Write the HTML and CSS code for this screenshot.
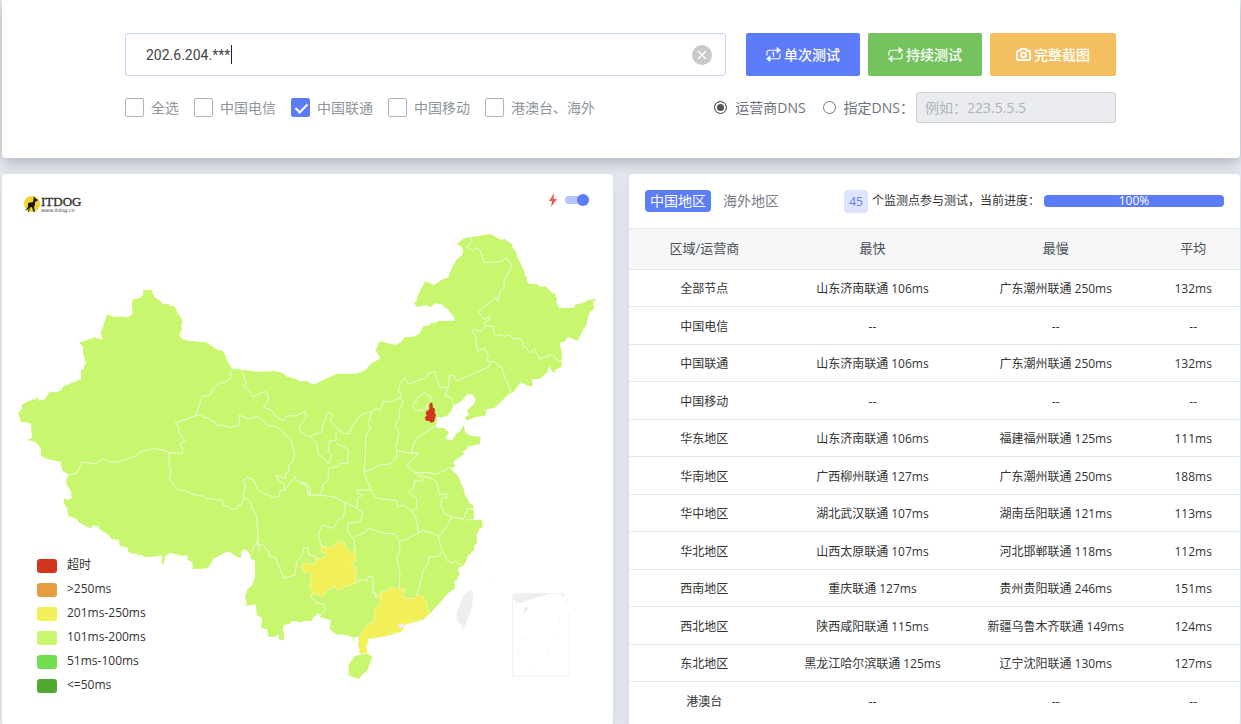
FILE: index.html
```html
<!DOCTYPE html>
<html lang="zh-CN">
<head>
<meta charset="utf-8">
<title>ITDOG</title>
<link rel="stylesheet" href="styles.css">
</head>
<body>
<main class="page">
  <section class="card query">
    <form class="query-form">
      <div class="row">
        <div class="field">
          <input class="field-input" type="text" aria-label="IP" value="202.6.204.***">
          <span class="caret"></span>
          <button class="clear" type="button" aria-label="清除">
            <svg viewBox="0 0 20 20"><circle cx="10" cy="10" r="10" fill="#c9c9c9"/><path d="M6 6l8 8M14 6l-8 8" stroke="#fff" stroke-width="1.5"/></svg>
          </button>
        </div>
        <div class="buttons">
          <button class="btn btn-blue" type="button"><svg viewBox="0 0 16 16"><path d="M1 9V6a2.500 2.500 0 0 1 2.500-2.500H14M12 1l3 2.500L12 6zM15 7v3a2.500 2.500 0 0 1-2.500 2.500H2M4 10l-3 2.500L4 15zM6.500 7L8 6v4.500"/></svg>单次测试</button>
          <button class="btn btn-green" type="button"><svg viewBox="0 0 16 16"><path d="M1 9V6a2.500 2.500 0 0 1 2.500-2.500H14M12 1l3 2.500L12 6zM15 7v3a2.500 2.500 0 0 1-2.500 2.500H2M4 10l-3 2.500L4 15z"/></svg>持续测试</button>
          <button class="btn btn-orange" type="button"><svg viewBox="0 0 16 16"><path class="bold" d="M2.500 4H4.500L5.500 2h5l1 2h2a1.500 1.500 0 0 1 1.500 1.500v7a1.500 1.500 0 0 1-1.500 1.500h-11A1.500 1.500 0 0 1 1 12.500v-7A1.500 1.500 0 0 1 2.500 4z"/><circle class="bold" cx="8" cy="8.500" r="2.500"/></svg>完整截图</button>
        </div>
      </div>
      <div class="row options">
        <div class="checks">
          <label class="check"><input type="checkbox">全选</label>
          <label class="check"><input type="checkbox">中国电信</label>
          <label class="check"><input type="checkbox" checked>中国联通</label>
          <label class="check"><input type="checkbox">中国移动</label>
          <label class="check"><input type="checkbox">港澳台、海外</label>
        </div>
        <div class="dns">
          <label class="radio"><input type="radio" name="dns" checked>运营商DNS</label>
          <label class="radio"><input type="radio" name="dns"><span>指定DNS<span class="colon">：</span></span></label>
          <input class="dns-input" type="text" aria-label="DNS" placeholder="例如：223.5.5.5" disabled>
        </div>
      </div>
    </form>
  </section>

  <div class="columns">
    <section class="card map-card">
      <header class="map-head">
        <svg class="logo" viewBox="0 0 60 18">
          <circle cx="9" cy="9" r="8" fill="#f0d530"/>
          <path d="M2 16l3-4V8l5-1 1-6 1 2 3 2-1 1-2 1v3l-1 2 1 5-2-1-1-4-3 1-1 4H6l1-4z" fill="#1b1712"/>
          <text class="logo-name" x="18" y="11">ITDOG</text>
          <text class="logo-url" x="18" y="17">www.itdog.cn</text>
        </svg>
        <div class="speed">
          <svg class="bolt" viewBox="0 0 8 14"><path d="M5 0L0 8h3L2 14l6-8H4.500z" fill="#ef5b50"/></svg>
          <input class="switch" type="checkbox" aria-label="极速" checked>
        </div>
      </header>
      <div class="map-body">
      <svg class="map" viewBox="6 168 1833 1497" role="img" aria-label="中国地图">
        <path class="land" d="M54 728L66 718 64 705 80 696 96 690 94 686 104 689 112 681 116 692 135 688 148 667 172 666 184 660 187 651 243 627 243 600 252 595 252 586 258 581 249 550 248 529 237 518 286 502 295 507 309 507 302 490 322 432 340 440 371 440 376 443 390 438 398 430 395 400 400 388 424 382 430 374 429 360 457 359 455 367 462 375 462 381 478 390 490 402 505 402 510 408 522 408 529 417 533 431 544 443 548 455 543 465 547 478 539 490 540 500 547 508 570 513 617 517 655 541 669 542 685 580 699 597 720 598 770 605 825 603 850 609 860 620 880 624 900 634 925 634 930 640 945 643 970 630 1010 612 1070 611 1095 601 1115 580 1140 566 1138 558 1127 541 1139 513 1187 525 1203 517 1213 502 1240 500 1258 492 1270 469 1290 466 1293 458 1302 460 1318 452 1365 453 1361 440 1345 420 1325 403 1305 400 1292 412 1280 405 1252 411 1241 400 1249 394 1252 380 1275 334 1303 345 1325 329 1346 322 1348 310 1370 268 1387 255 1389 240 1384 229 1369 224 1391 205 1410 202 1470 192 1505 210 1513 206 1538 224 1536 230 1549 248 1552 262 1562 280 1566 290 1574 305 1574 317 1581 320 1580 333 1588 341 1612 343 1620 350 1635 348 1657 369 1668 372 1667 382 1673 388 1668 396 1678 414 1720 413 1728 403 1750 398 1765 390 1790 386 1780 395 1782 416 1770 425 1761 450 1759 467 1750 478 1733 512 1704 502 1695 514 1679 520 1686 550 1685 590 1664 601 1667 608 1656 604 1648 588 1643 606 1620 626 1595 628 1599 640 1597 650 1580 646 1562 637 1540 666 1527 672 1483 714 1460 718 1455 738 1430 740 1399 752 1395 742 1406 736 1401 722 1424 700 1426 685 1418 674 1402 672 1385 693 1360 707 1353 725 1340 738 1325 742 1313 741 1308 767 1312 773 1333 774 1347 788 1337 801 1340 808 1357 811 1370 790 1380 783 1391 765 1396 790 1415 798 1442 800 1440 822 1402 830 1400 838 1388 845 1392 852 1360 876 1366 890 1350 895 1375 918 1392 960 1396 978 1407 992 1408 1000 1420 1006 1422 1050 1445 1049 1449 1072 1440 1074 1430 1095 1431 1122 1424 1124 1423 1140 1403 1158 1398 1175 1387 1190 1376 1192 1375 1202 1380 1215 1373 1218 1374 1226 1362 1235 1366 1255 1346 1268 1300 1320 1289 1332 1270 1350 1215 1364 1196 1362 1197 1388 1158 1399 1103 1407 1099 1425 1102 1448 1080 1451 1074 1422 1077 1400 1062 1402 1061 1422 1058 1402 1036 1394 1008 1393 990 1378 992 1350 960 1342 962 1333 950 1332 938 1345 935 1352 918 1353 910 1352 905 1357 893 1355 876 1353 869 1363 853 1364 848 1380 853 1390 851 1411 838 1411 836 1392 820 1402 804 1399 802 1378 783 1374 786 1344 770 1335 768 1303 735 1308 740 1300 735 1280 742 1258 756 1246 765 1220 765 1172 752 1167 750 1152 734 1137 724 1145 724 1162 715 1163 690 1147 680 1145 640 1166 627 1192 608 1196 578 1197 577 1175 563 1171 562 1156 545 1157 510 1148 495 1160 491 1184 485 1180 486 1156 460 1160 432 1162 425 1153 419 1158 405 1149 400 1153 385 1145 384 1133 360 1128 356 1110 336 1108 325 1095 297 1076 295 1067 275 1068 273 1076 236 1057 230 1047 204 1037 202 1015 192 1000 192 984 203 990 215 984 213 965 198 940 200 925 208 915 187 902 182 875 143 868 123 857 122 835 108 816 82 810 98 803 95 797 93 762 75 755 63 757 60 745z"/>
        <g class="border">
          <path d="M699 598L689 605 694 620 688 629 670 640 665 636 640 655 630 676 606 679 597 710 586 737 525 760 536 768 536 785 555 812 540 822 548 838 548 850 504 848"/>
          <path d="M586 737L605 735 610 742 625 744 632 752 645 754 650 765 668 766 695 774 700 768 710 770 718 760 718 735 748 748 768 740 785 747 805 768 823 768 850 785 855 795 872 806 880 840 884 855 876 878 864 885 868 903 858 910 856 925 826 916 838 935 850 940 856 960 840 963 838 978 820 983 800 972 790 972 775 960 758 927 740 923 728 933 737 943 735 955 728 980"/>
          <path d="M208 914L230 910 247 876 285 881 310 865 325 874 355 876 385 865 408 858 418 846 460 836 490 840 515 850M504 848L510 870 503 882 513 895 509 930 535 960 557 962 580 974 610 978 618 986 640 986 655 994 660 988 665 988 672 1008 690 1010 695 1018 712 1016 715 1005 725 1003 732 980 752 996 758 1018 770 1040 777 1145M755 1150L760 1130 770 1125 768 1112 779 1126 790 1125 806 1145 808 1160 825 1162 852 1225 885 1215 890 1175 905 1160 912 1132 925 1134 926 1154 948 1160 950 1175"/>
          <path d="M724 600L738 636 731 648 752 668 757 682 780 670 800 665 806 690 790 710 815 722 828 740 850 752 860 738 888 737 915 725 920 740 898 770 900 785 925 800 965 786 970 760 982 728 995 730 997 740 990 755 1018 780 1037 792 1048 790 1060 763 1085 733 1098 730 1105 725 1115 728 1120 718 1142 717 1150 695 1175 695 1200 683 1202 672 1195 664 1200 640 1215 622 1225 642 1260 628 1275 628 1285 610 1305 604 1310 625 1320 653 1345 653 1349 615 1362 618 1372 635 1380 628 1440 602 1468 590 1470 575 1485 576 1498 592 1504 588 1515 625 1530 655 1530 668"/>
          <path d="M1345 653L1335 675 1355 685 1361 705M930 800L950 820 955 850 985 880 997 855 985 845 988 812 1008 812 1008 790 1018 780M1008 820L1045 838 1043 880 1020 880 1015 890 985 895 985 930 968 945 968 960 955 975M856 960L870 938 885 920 890 932 918 940 930 955 930 978M900 940L918 944 925 975 955 975M955 975L1000 980 1035 998 1072 1015"/>
          <path d="M1115 728L1105 760 1110 775 1097 800 1097 840 1092 907 1140 885 1170 882 1190 862 1190 842 1235 850 1255 850 1220 888 1245 908 1285 908 1310 912 1325 905 1345 895 1350 892M1200 683L1210 695 1197 720 1200 740 1185 765 1197 790 1188 830 1190 842M1235 850L1235 838 1250 805 1280 785 1308 767"/>
          <path d="M1092 907L1105 940 1115 965 1130 985 1190 992 1193 1010 1210 1005 1235 1022 1250 1015 1250 985 1225 967 1240 955 1245 930 1265 935 1270 925 1245 908M1260 907L1275 922 1285 920 1310 935 1318 975 1340 970 1340 982 1325 985 1322 1005 1335 1032 1355 1040 1340 1070 1315 1100 1300 1090 1280 1085 1270 1080 1255 1088 1250 1050 1235 1022"/>
          <path d="M1355 1040L1390 1048 1403 1015 1422 1018M1397 1050L1422 1048M1315 1100L1322 1130 1330 1145 1340 1170 1355 1180 1365 1172 1385 1188M1330 1145L1310 1160 1287 1160 1283 1185 1270 1200 1265 1225 1250 1275M1115 960L1070 960 1075 970 1088 975 1072 985 1072 1015 1090 1030 1080 1055 1043 1060 1043 1085 1063 1110 1065 1145M1063 1100L1100 1085 1105 1075 1150 1090 1185 1092 1190 1100 1198 1115 1225 1105 1255 1088M1198 1115L1200 1140 1190 1165 1200 1210 1197 1255"/>
          <path d="M1035 998L1035 1020 1028 1045 1015 1050 1000 1075 965 1065 955 1095 965 1130 980 1132M1065 1240L1085 1228 1100 1232 1105 1220 1118 1220 1120 1250 1118 1270 1128 1268 1126 1282 1142 1276M932 1280L950 1300 973 1303 976 1322 960 1335"/>
          <path d="M1410 202L1417 212 1400 232 1420 242 1428 233 1440 240 1452 278 1475 276 1505 275 1515 264 1522 268 1537 288 1527 305 1513 330 1512 356 1502 360 1494 395 1488 382 1435 425 1452 448 1468 440 1468 450 1454 456 1456 468 1478 468 1482 490 1490 497 1505 494 1510 500 1527 495 1540 507 1560 505 1568 515 1567 527 1580 532 1585 545 1592 548 1603 535 1618 568 1635 560 1645 562 1648 552 1655 557 1662 555 1668 568 1685 575M1456 468L1443 485 1423 478 1415 482 1428 500 1427 520 1433 543 1455 535 1465 560 1460 572 1470 575"/>
          <path d="M1272 665L1283 677 1292 678 1293 697 1280 705 1282 715 1270 717 1270 722 1245 720 1238 710 1240 700 1248 698 1248 685 1265 675z"/>
        </g>
        <path class="slow" d="M950 1167L975 1162 980 1152 963 1145 965 1132 975 1130 985 1136 995 1128 1010 1125 1015 1110 1022 1118 1035 1116 1038 1135 1052 1148 1065 1142 1066 1172 1052 1190 1068 1190 1070 1205 1065 1208 1068 1240 1055 1243 1045 1250 1035 1248 1018 1262 1010 1258 1005 1248 980 1262 970 1278 955 1275 950 1270 940 1272 932 1280 938 1265 930 1245 935 1215 925 1205 912 1210 905 1188 912 1180 945 1182z"/>
        <path class="slow" d="M1140 1275L1145 1262 1162 1265 1165 1255 1175 1250 1190 1257 1218 1257 1205 1280 1225 1285 1245 1285 1250 1275 1265 1278 1280 1298 1283 1320 1289 1332 1275 1340 1270 1350 1243 1352 1215 1364 1209 1382 1197 1388 1175 1388 1158 1399 1103 1407 1105 1422 1099 1425 1102 1448 1080 1451 1074 1422 1077 1400 1105 1362 1122 1355 1125 1320 1140 1300z"/>
        <path class="land" d="M1065 1458L1100 1450 1117 1460 1108 1485 1100 1505 1090 1510 1076 1527 1046 1516 1046 1482z"/>
        <path class="timeout" d="M1293 697L1297 700 1299 713 1305 716 1304 728 1308 735 1302 755 1292 758 1288 753 1278 752 1274 742 1280 738 1277 727 1288 718 1288 703z"/>
        <path class="empty" d="M1412 1258L1420 1270 1416 1310 1400 1355 1390 1382 1388 1370 1370 1350 1370 1325 1388 1280zM1192 1370l5-8 12-2 6 8-10 8zM1538 1278l12-8h104l-62 18-30 10h-14zM1574 1312h12l-8 14-10 4zM1680 1270h14l-4 14z"/>
        <path class="sea" d="M1538 1270V1518H1708V1330M1538 1270H1694M1702 1286l-8 16M1677 1345v18M1580 1398l-8 12M1676 1394l-8 12M1555 1440v14M1646 1442l-8 14M1608 1486l-8 4M1470 1238h4"/>
      </svg>
      <ul class="legend">
        <li><i class="swatch s-timeout"></i>超时</li>
        <li><i class="swatch s-250"></i>&gt;250ms</li>
        <li><i class="swatch s-201"></i>201ms-250ms</li>
        <li><i class="swatch s-101"></i>101ms-200ms</li>
        <li><i class="swatch s-51"></i>51ms-100ms</li>
        <li><i class="swatch s-50"></i>&lt;=50ms</li>
      </ul>
      </div>
    </section>

    <section class="card result">
      <header class="result-head">
        <nav class="tabs">
          <a class="tab active" href="#china">中国地区</a>
          <a class="tab" href="#overseas">海外地区</a>
        </nav>
        <div class="progress">
          <span class="count">45</span>
          <span>个监测点参与测试，当前进度<span class="colon">：</span></span>
          <div class="bar"><div class="bar-fill" style="width:100%">100%</div></div>
        </div>
      </header>
      <table class="stats">
        <thead><tr><th class="c-area">区域/运营商</th><th class="c-fast">最快</th><th class="c-slow">最慢</th><th class="c-avg">平均</th></tr></thead>
        <tbody>
          <tr><td>全部节点</td><td>山东济南联通 106ms</td><td>广东潮州联通 250ms</td><td>132ms</td></tr>
          <tr><td>中国电信</td><td>--</td><td>--</td><td>--</td></tr>
          <tr><td>中国联通</td><td>山东济南联通 106ms</td><td>广东潮州联通 250ms</td><td>132ms</td></tr>
          <tr><td>中国移动</td><td>--</td><td>--</td><td>--</td></tr>
          <tr><td>华东地区</td><td>山东济南联通 106ms</td><td>福建福州联通 125ms</td><td>111ms</td></tr>
          <tr><td>华南地区</td><td>广西柳州联通 127ms</td><td>广东潮州联通 250ms</td><td>188ms</td></tr>
          <tr><td>华中地区</td><td>湖北武汉联通 107ms</td><td>湖南岳阳联通 121ms</td><td>113ms</td></tr>
          <tr><td>华北地区</td><td>山西太原联通 107ms</td><td>河北邯郸联通 118ms</td><td>112ms</td></tr>
          <tr><td>西南地区</td><td>重庆联通 127ms</td><td>贵州贵阳联通 246ms</td><td>151ms</td></tr>
          <tr><td>西北地区</td><td>陕西咸阳联通 115ms</td><td>新疆乌鲁木齐联通 149ms</td><td>124ms</td></tr>
          <tr><td>东北地区</td><td>黑龙江哈尔滨联通 125ms</td><td>辽宁沈阳联通 130ms</td><td>127ms</td></tr>
          <tr><td>港澳台</td><td>--</td><td>--</td><td>--</td></tr>
        </tbody>
      </table>
    </section>
  </div>
</main>
</body>
</html>
```

FILE: styles.css
```css
* { box-sizing: border-box; }
body {
  margin: 0;
  background: #e8ebf1;
  color: #333;
  font: 12px/18px "Open Sans", "Noto Sans CJK SC", sans-serif;
}
input, button { font: inherit; color: inherit; margin: 0; }
.page { padding: 0 1px 0 2px; }
.colon { font-family: "Noto Sans CJK TC", sans-serif; line-height: 1; }
.card {
  background: #fff;
  border-radius: 4px;
  box-shadow: 0 4px 14px rgba(90, 105, 120, .18);
}

.query { padding: 33px 124px 35px 123px; border-radius: 0 0 4px 4px; box-shadow: 0 4px 16px rgba(70, 85, 95, .4); }
.query-form { font-size: 14px; line-height: 20px; }
.row { display: flex; justify-content: space-between; gap: 20px; }
.options { align-items: center; margin-top: 16px; }
.field { position: relative; display: flex; flex: 1; }
.field-input {
  width: 100%;
  height: 43px;
  padding: 0 50px 0 20px;
  border: 1px solid #c8d3fb;
  border-radius: 3px;
  background: #fff;
  color: #444;
  font-family: Roboto, "Noto Sans CJK SC", sans-serif;
  outline: 0;
}
.caret { position: absolute; left: 106px; top: 12px; width: 1px; height: 19px; background: #222; }
.clear { position: absolute; right: 14px; top: 12px; width: 20px; height: 20px; padding: 0; border: 0; background: none; }
.clear svg { display: block; }
.checks { display: flex; gap: 15px; color: #8f949d; }
.check { display: flex; align-items: center; gap: 7px; white-space: nowrap; }
.check input { appearance: none; width: 19px; height: 19px; border: 1px solid #b0b2bd; border-radius: 2px; background: #fff; }
.check input:checked { position: relative; border-color: #5c7cfa; background: #5c7cfa; }
.check input:checked::after {
  content: "";
  position: absolute;
  left: 6px;
  top: 2px;
  width: 5px;
  height: 10px;
  border: solid #fff;
  border-width: 0 2px 2px 0;
  transform: rotate(45deg);
}
.buttons { display: flex; gap: 8px; }
.btn { display: flex; align-items: center; gap: 3px; height: 43px; padding: 0 20px; border: 0; border-radius: 2px; color: #fff; font-weight: 500; white-space: nowrap; }
.btn svg { width: 15px; height: 15px; fill: none; stroke: #fff; stroke-width: 1.2; }
.btn .bold { stroke-width: 2; }
.btn-blue { background: #5c7cfa; }
.btn-green { background: #74c35f; }
.btn-orange { padding: 0 26px; background: #f4bf60; }
.dns { display: flex; align-items: center; color: #6c737e; }
.radio { display: flex; align-items: center; gap: 8px; white-space: nowrap; margin-right: 17px; }
.radio + .radio { margin-right: 2px; }
.radio input { appearance: none; width: 13px; height: 13px; border: 1px solid #777; border-radius: 50%; }
.radio input:checked { border-color: #555; background: #555; box-shadow: inset 0 0 0 2px #fff; }
.dns-input { width: 200px; height: 31px; padding: 0 8px; border: 1px solid #cdd0da; border-radius: 3px; background: #eaebef; font-family: "Open Sans", "Noto Sans CJK TC", sans-serif; }
.dns-input::placeholder { color: #b0b4bc; opacity: 1; }

.columns { display: grid; grid-template-columns: 1fr 1fr; gap: 16px; margin-top: 16px; }
.map-head { display: flex; justify-content: space-between; align-items: center; height: 52px; padding: 4px 24px 0 21px; }
.logo { width: 60px; height: 18px; margin-top: 4px; }
.logo-name { font: 13px "Liberation Serif", serif; fill: #302a28; stroke: #302a28; stroke-width: .3; }
.logo-url { font: 5px "DejaVu Sans", sans-serif; fill: #444; }
.speed { display: flex; align-items: center; gap: 8px; margin-bottom: 4px; }
.bolt { width: 8px; height: 14px; }
.switch { appearance: none; position: relative; width: 24px; height: 8px; border-radius: 4px; background: #b5c4fd; }
.switch::after { content: ""; position: absolute; right: 0; top: -2px; width: 12px; height: 12px; border-radius: 50%; background: #5c7cfa; }
.map-body { position: relative; }
.map { display: block; width: 100%; }
.land { fill: #c8f76f; }
.border { fill: none; stroke: #f1fdd9; stroke-width: 3; stroke-linejoin: round; }
.slow { fill: #f3ef57; stroke: #fbf9c0; stroke-width: 2; }
.timeout { fill: #d2341d; }
.empty { fill: #eee; }
.sea { fill: none; stroke: #f1f1f1; stroke-width: 3; }
.legend { position: absolute; left: 35px; bottom: 28px; margin: 0; padding: 0; list-style: none; line-height: 24px; }
.legend li { display: flex; align-items: center; gap: 10px; }
.swatch { width: 20px; height: 14px; margin-top: 2px; border-radius: 3px; }
.s-timeout { background: #d2341d; }
.s-250 { background: #e69d42; }
.s-201 { background: #f3ef57; }
.s-101 { background: #c8f76f; }
.s-51 { background: #72df50; }
.s-50 { background: #50a830; }

.result-head { display: flex; justify-content: space-between; align-items: center; height: 54px; padding: 0 16px; }
.tabs { display: flex; gap: 7px; font-size: 14px; line-height: 22px; }
.tab { padding: 0 5px; border-radius: 4px; color: #777c85; text-decoration: none; white-space: nowrap; }
.tab.active { background: #5c7cfa; color: #fff; }
.progress { display: flex; align-items: center; gap: 4px; white-space: nowrap; }
.count { padding: 0 5px; border-radius: 4px; background: #dee4fe; color: #5c7cfa; line-height: 23px; }
.bar { width: 180px; border-radius: 4px; background: #e9ecef; }
.bar-fill { border-radius: 4px; background: #5c7cfa; color: #fff; text-align: center; line-height: 12px; }
.stats { width: 100%; border-collapse: collapse; table-layout: fixed; text-align: center; }
.stats th { height: 41px; padding: 0 2px 2px 0; border: solid #e4e8ec; border-width: 1px 0; background: #f7f7f7; color: #495057; font-size: 13px; font-weight: 400; }
.stats td { height: 37px; padding: 2px 2px 0 0; border-bottom: 1px solid #e4e8ec; white-space: nowrap; }
.stats tr:nth-child(even) td { height: 38px; }
.stats tr:last-child td { border-bottom: 0; }
.c-area { width: 25%; }
.c-fast, .c-slow { width: 30%; }
.c-avg { width: 15%; }
```
